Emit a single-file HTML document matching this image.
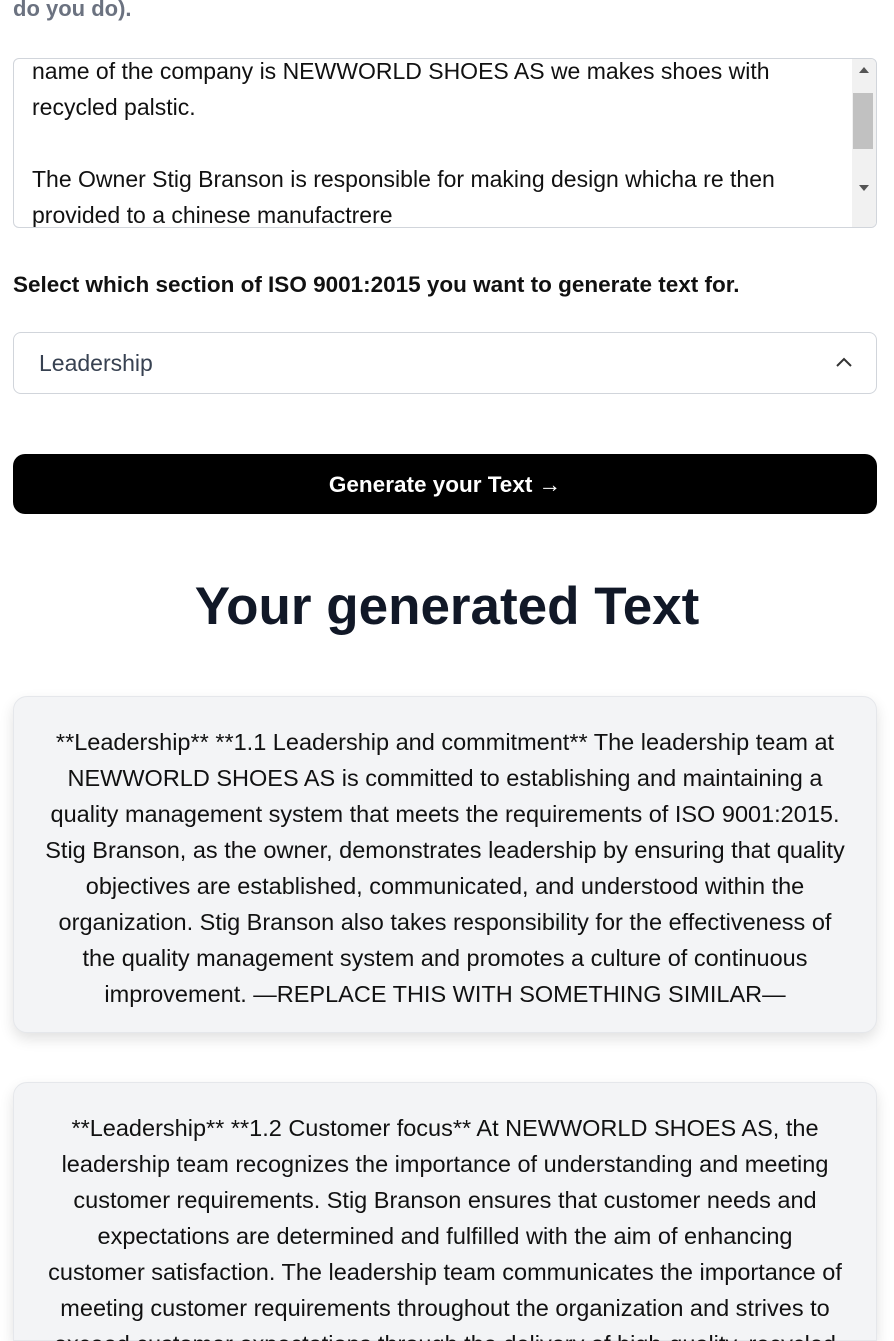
<!DOCTYPE html>
<html style="height:1341px;overflow:hidden"><head><meta charset="utf-8"><style>
*{box-sizing:border-box;margin:0;padding:0}
body{width:894px;height:1341px;overflow:hidden;background:#fff;font-family:"Liberation Sans",sans-serif;color:#111;position:relative}
.a{position:absolute}
.top{left:13px;top:-4px;font-size:22px;font-weight:bold;color:#6b7280}
.ta{left:13px;top:58px;width:864px;height:170px;border:1px solid #d1d5db;border-radius:6px;overflow:hidden}
.ta .t{position:absolute;left:18px;top:-6px;font-size:23px;line-height:36px;color:#111;white-space:nowrap}
.sb{position:absolute;right:0;top:0;width:24px;height:168px;background:#f1f1f1}
.thumb{position:absolute;right:3px;top:34px;width:20px;height:56px;background:#c1c1c1}
.lbl{left:13px;top:272px;font-size:22.5px;font-weight:bold;white-space:nowrap}
.sel{left:13px;top:332px;width:864px;height:62px;border:1px solid #d1d5db;border-radius:8px;font-size:23px;color:#374151;padding:17px 0 0 25px}
.btn{left:13px;top:454px;width:864px;height:60px;background:#000;border-radius:12px;color:#fff;font-weight:bold;font-size:22.5px;text-align:center;line-height:62px}
.h{left:0;width:894px;top:576px;text-align:center;font-size:53px;font-weight:bold;color:#111827}
.card{left:13px;width:864px;background:#f3f4f6;border:1px solid #e5e7eb;border-radius:14px;box-shadow:0 6px 14px rgba(0,0,0,.12);text-align:center;font-size:23.5px;line-height:36px;color:#111;padding-top:27px;white-space:nowrap}
</style></head><body>
<div class="a top">do you do).</div>
<div class="a ta"><div class="t">name of the company is NEWWORLD SHOES AS we makes shoes with<br>recycled palstic.<br><br>The Owner Stig Branson is responsible for making design whicha re then<br>provided to a chinese manufactrere</div>
<div class="sb"><div style="position:absolute;left:7px;top:8px;border:5px solid transparent;border-bottom:6px solid #555;border-top:0"></div><div class="thumb"></div><div style="position:absolute;left:7px;top:126px;border:5px solid transparent;border-top:6px solid #555;border-bottom:0"></div></div></div>
<div class="a lbl">Select which section of ISO 9001:2015 you want to generate text for.</div>
<div class="a sel">Leadership<svg style="position:absolute;right:24px;top:24px" width="16" height="10" viewBox="0 0 16 10"><path d="M1 9L8 2L15 9" fill="none" stroke="#333" stroke-width="2"/></svg></div>
<div class="a btn">Generate your Text →</div>
<div class="a h">Your generated Text</div>
<div class="a card" style="top:696px;height:337px">**Leadership** **1.1 Leadership and commitment** The leadership team at<br>NEWWORLD SHOES AS is committed to establishing and maintaining a<br>quality management system that meets the requirements of ISO 9001:2015.<br>Stig Branson, as the owner, demonstrates leadership by ensuring that quality<br>objectives are established, communicated, and understood within the<br>organization. Stig Branson also takes responsibility for the effectiveness of<br>the quality management system and promotes a culture of continuous<br>improvement. —REPLACE THIS WITH SOMETHING SIMILAR—</div>
<div class="a card" style="top:1082px;height:259px;border-bottom-left-radius:0;border-bottom-right-radius:0">**Leadership** **1.2 Customer focus** At NEWWORLD SHOES AS, the<br>leadership team recognizes the importance of understanding and meeting<br>customer requirements. Stig Branson ensures that customer needs and<br>expectations are determined and fulfilled with the aim of enhancing<br>customer satisfaction. The leadership team communicates the importance of<br>meeting customer requirements throughout the organization and strives to<br>exceed customer expectations through the delivery of high-quality, recycled</div>
</body></html>
